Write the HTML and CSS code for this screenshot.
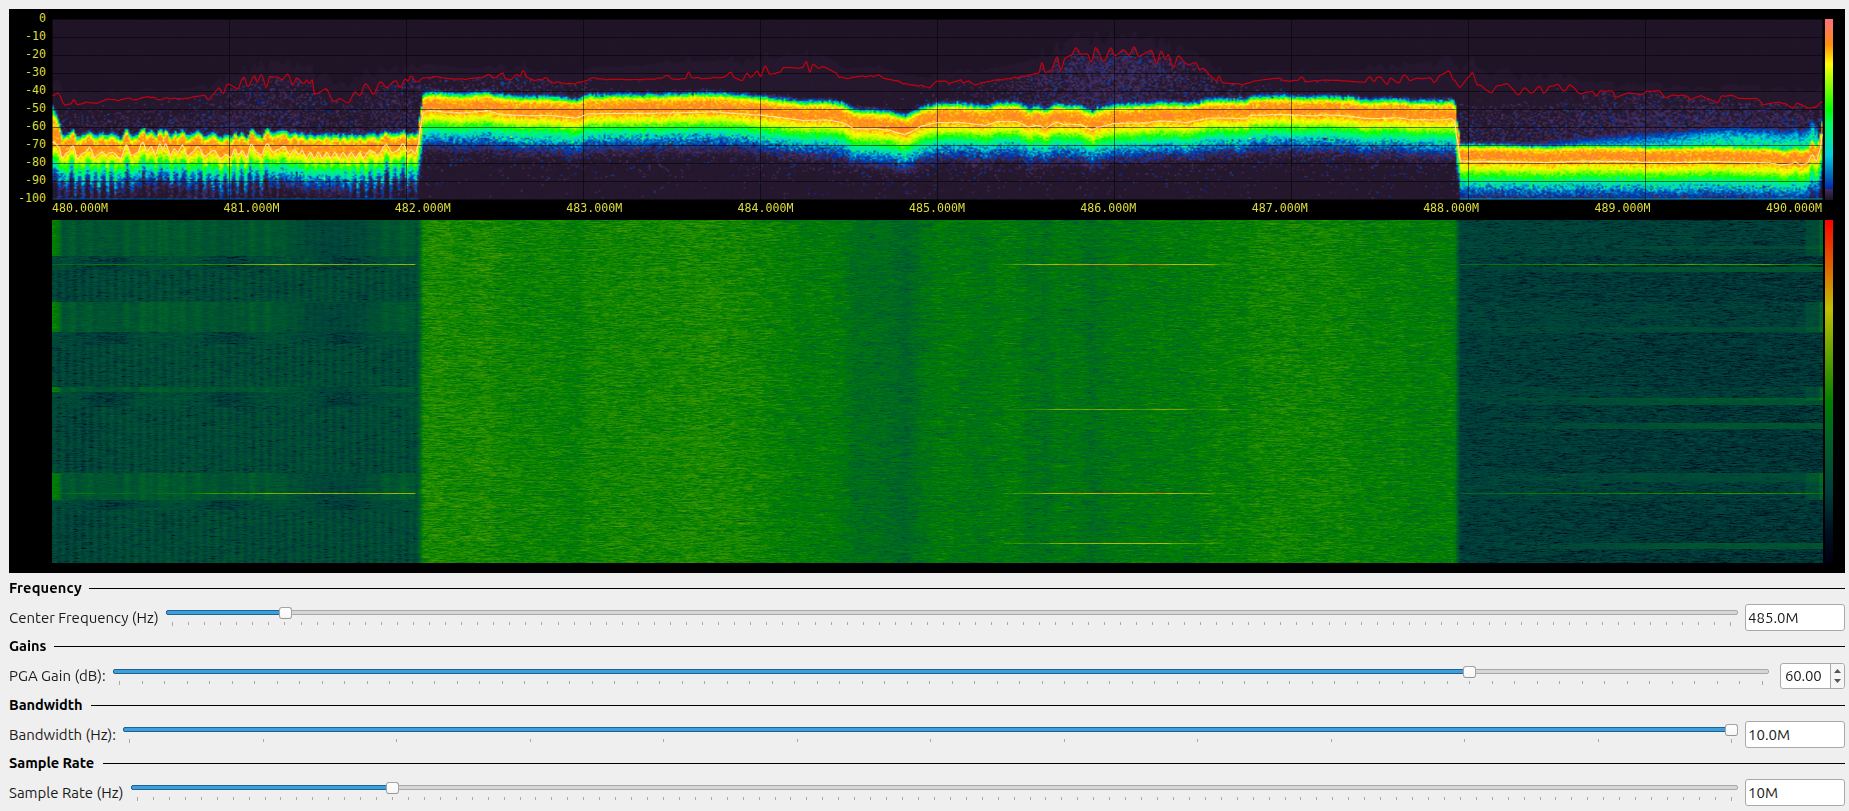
FILE: index.html
```html
<!DOCTYPE html>
<html lang="en">
<head>
<meta charset="utf-8">
<title>Spectrum</title>
<link rel="stylesheet" href="styles.css">
</head>
<body>
<main class="window">
  <section class="scope">
    <div class="y-axis"><span>0</span><span>-10</span><span>-20</span><span>-30</span><span>-40</span><span>-50</span><span>-60</span><span>-70</span><span>-80</span><span>-90</span><span>-100</span></div>
    <canvas class="spectrum" id="spectrum" width="1771" height="181"></canvas>
    <div class="scale scale-power"></div>
    <div class="x-axis"><span>480.000M</span><span>481.000M</span><span>482.000M</span><span>483.000M</span><span>484.000M</span><span>485.000M</span><span>486.000M</span><span>487.000M</span><span>488.000M</span><span>489.000M</span><span>490.000M</span></div>
    <canvas class="waterfall" id="waterfall" width="1771" height="343"></canvas>
    <div class="scale scale-fall"></div>
  </section>

  <section class="group">
    <h2><span class="t-frequency">Frequency</span></h2>
    <div class="row">
      <label class="l-frequency"><span>Center Frequency (Hz)</span></label>
      <div class="slider" data-steps="97" data-value="0.0728"></div>
      <div class="field">485.0M</div>
    </div>
  </section>
  <section class="group tall">
    <h2><span class="t-gains">Gains</span></h2>
    <div class="row">
      <label class="l-gain"><span>PGA Gain (dB):</span></label>
      <div class="slider" data-steps="73" data-value="0.8216"></div>
      <div class="spin"><span class="spin-value">60.00</span>
        <span class="spin-buttons">
          <svg width="7" height="4" viewBox="0 0 7 4"><path d="M0 4 3.5 0 7 4z"/></svg>
          <svg width="7" height="4" viewBox="0 0 7 4"><path d="M0 0 3.5 4 7 0z"/></svg>
        </span>
      </div>
    </div>
  </section>
  <section class="group">
    <h2><span class="t-bandwidth">Bandwidth</span></h2>
    <div class="row">
      <label class="l-bandwidth"><span>Bandwidth (Hz):</span></label>
      <div class="slider" data-steps="12" data-value="1"></div>
      <div class="field">10.0M</div>
    </div>
  </section>
  <section class="group">
    <h2><span class="t-rate">Sample Rate</span></h2>
    <div class="row">
      <label class="l-rate"><span>Sample Rate (Hz)</span></label>
      <div class="slider" data-steps="100" data-value="0.16"></div>
      <div class="field">10M</div>
    </div>
  </section>
</main>
<script src="scope.js"></script>
</body>
</html>
```
FILE: styles.css
```css
* { box-sizing: border-box; }
body { margin: 0; background: #efefef; color: #1a1a1a; font: 15px "Ubuntu", "Noto Sans", sans-serif; overflow: hidden; }
.window { width: 1849px; height: 811px; padding: 9px 4px 0 9px; }
.scope {
  height: 564px; margin-bottom: 5px; background: #000;
  display: grid; grid-template-columns: 43px 1771px 2px 8px 12px; grid-template-rows: 10px 181px 20px 343px 10px;
  font: 11.63px "DejaVu Sans Mono", monospace; color: #dcdc3c;
}
.y-axis { grid-area: 2 / 1; display: flex; flex-direction: column; margin-top: -10px; padding-right: 6px; text-align: right; height: 198px; }
.y-axis span { height: 18px; line-height: 18px; }
.spectrum { grid-area: 2 / 2; display: block; }
.x-axis { grid-area: 3 / 2; display: flex; justify-content: space-between; line-height: 17px; padding-right: 1px; }
.waterfall { grid-area: 4 / 2; display: block; }
.scale-power { grid-area: 2 / 4; background: linear-gradient(to top, #1e1426 0%, #432c5e 6%, #0028a8 6.1%, #00d0e0 25%, #00ff60 42%, #00ff00 50%, #ffff00 75%, #ff8c10 86%, #ff7080 100%); }
.scale-fall { grid-area: 4 / 4; background: linear-gradient(to top, #000010 0%, #001020 9%, #00403c 21%, #006428 37%, #008000 47%, #c0c000 74%, #ff0000 100%); }

.group { height: 58px; }
.group.tall { height: 59px; }
h2 { margin: 0; height: 20px; font-size: 14.6px; font-weight: 700; color: #000; display: flex; align-items: center; gap: 6px; letter-spacing: -.05px; }
.t-frequency { letter-spacing: .15px; }
h2 span { line-height: 20px; white-space: nowrap; }
h2::after { content: ""; flex: 1; height: 1px; background: #000; }
.t-frequency { width: 74px; }
.t-gains { width: 39px; }
.t-bandwidth { width: 76px; }
.t-rate { width: 88px; }
.row { height: 39px; display: flex; align-items: center; }
.tall .row { height: 40px; }
label { white-space: nowrap; flex: none; line-height: 20px; }
.l-frequency { width: 157px; }
.l-gain { width: 104px; }
.l-bandwidth { width: 114px; }
.l-rate { width: 122px; }

.slider { flex: 1; height: 38px; padding-top: 11px; margin-right: 7px; position: relative; }
.tall .slider { margin-right: 11px; height: 39px; padding-top: 12px; }
.groove { height: 5px; border: 1px solid #a8a8a8; border-radius: 2px; background: #d6d6d6; }
.fill { height: 5px; margin: -1px; border: 1px solid #1f6391; border-radius: 2px; background: #3f9fdc; }
.knob { position: absolute; top: 8px; width: 13px; height: 12px; border: 1px solid #a4a4a4; border-bottom-color: #969696; border-radius: 3px; background: linear-gradient(#fff, #f6f6f6); }
.tall .knob { top: 9px; }
.ticks { display: flex; justify-content: space-between; padding: 0 6px; margin-top: 7px; }
.ticks i { width: 1px; height: 3px; background: #a9a9a9; flex: none; }
.ticks i:first-child, .ticks i:last-child { height: 4px; }

.field { width: 100px; height: 27px; border: 1px solid #a9a9a9; border-radius: 3px; background: #fff; padding-left: 2px; line-height: 25px; margin-top: -1px; }
.spin { width: 65px; height: 26px; border: 1px solid #a9a9a9; border-radius: 3px; background: #fff; display: flex; line-height: 24px; overflow: hidden; margin-top: -1px; }
.spin-value { flex: 1; padding-left: 4px; letter-spacing: -.2px; }
.spin-buttons { width: 14px; border-left: 1px solid #a9a9a9; background: #f5f5f5; display: flex; flex-direction: column; align-items: center; justify-content: space-between; padding: 5px 0; }
.spin-buttons svg { fill: #555; display: block; }
```
FILE: scope.js
```js
// Deterministic random source so every paint is identical.
let seed = 48500;
function rnd() {
  seed = (seed + 0x6D2B79F5) | 0;
  let t = Math.imul(seed ^ (seed >>> 15), 1 | seed);
  t = (t + Math.imul(t ^ (t >>> 7), 61 | t)) ^ t;
  return ((t ^ (t >>> 14)) >>> 0) / 4294967296;
}
const gauss = () => rnd() + rnd() + rnd() + rnd() - 2;
const clamp = (v, a, b) => Math.max(a, Math.min(b, v));
const hump = (x, c, w) => Math.exp(-((x - c) ** 2) / (2 * w * w));

// Traces are listed per quarter of the band, in thirds of a pixel.
function trace(parts) {
  const pts = [];
  for (const [off, list] of parts)
    for (let i = 0; i < list.length; i += 2) pts.push([off - 52 + list[i] / 3, list[i + 1] / 3 - 19]);
  pts.sort((a, b) => a[0] - b[0]);
  return pts;
}
function sampler(pts) {
  return x => {
    if (x <= pts[0][0]) return pts[0][1];
    for (let i = 1; i < pts.length; i++) if (x <= pts[i][0]) {
      const a = pts[i - 1], b = pts[i];
      const t = (x - a[0]) / (b[0] - a[0] || 1), s = b[0] - a[0] < 10 ? t * t * (3 - 2 * t) : t;
      return a[1] + (b[1] - a[1]) * s;
    }
    return pts[pts.length - 1][1];
  };
}
const left = [160,425,175,440,185,472,200,456,218,436,230,474,250,457,268,442,282,470,305,455,315,462,335,455,360,474,378,433,392,464,408,460,427,426,440,454,452,440,465,462,478,430,488,447,495,430,510,464,522,445,532,456,545,434,562,467,577,455,592,438,612,467,640,450,660,474,678,462,690,472,703,445,713,464,725,450,738,472,752,430,768,456,782,464,800,430,817,455,832,448,850,438,868,462,882,448,895,462,905,450];
for (let x = 917, k = 0; x < 1105; x += 12.3, k++) left.push(x, k % 2 ? 456 : 473);
left.push(1110,450,1132,464,1157,432,1175,456,1192,450,1207,430,1222,456,1232,448,1245,460,1252,438,1260,380,1268,335,1290,331,1379,338);
const avgPts = trace([
  [0, left],
  [460, [0,338,80,331,120,341,200,346,270,345,345,353,385,340,600,338,760,334,900,344,1030,360,1100,358,1150,367,1180,385,1250,385,1290,390,1333,403,1379,380]],
  [920, [0,377,50,366,120,366,195,375,230,363,290,364,325,380,350,374,375,383,405,366,430,371,480,372,512,388,535,380,580,369,680,367,720,361,800,366,870,352,930,353,975,355,990,345,1080,342,1180,346,1215,343,1290,347,1330,354,1379,354]],
  [1380, [0,353,60,352,90,358,195,358,212,354,222,362,230,420,240,482,370,483,500,486,600,482,740,483,820,486,900,485,1000,483,1100,486,1170,488,1200,493,1230,491,1245,485,1260,493,1280,488,1295,463,1308,482,1318,450,1326,400]]
]);
const maxPts = trace([
  [0, [158,285,172,277,192,312,210,312,220,297,230,312,260,305,290,308,320,296,350,299,385,293,400,299,440,288,475,297,500,293,560,294,610,283,625,297,655,263,668,280,680,250,710,265,730,232,742,260,762,227,770,243,782,223,798,258,808,228,830,230,845,238,862,222,878,255,888,233,912,250,918,240,925,247,935,238,942,283,975,264,1000,303,1020,294,1042,308,1065,275,1078,285,1095,250,1118,280,1140,245,1158,260,1185,240,1198,262,1215,235,1222,243,1232,227,1248,245,1270,232,1300,229,1379,236]],
  [460, [0,237,60,232,85,223,100,232,128,217,134,235,150,237,170,222,178,228,188,210,200,230,225,241,255,234,275,245,345,250,375,240,395,232,440,237,550,237,600,233,622,224,635,235,675,235,684,215,695,233,730,234,790,229,812,215,822,232,845,239,860,219,870,231,890,214,900,229,914,197,928,221,958,215,970,200,1025,203,1038,184,1048,217,1058,191,1075,205,1085,198,1125,215,1138,230,1165,236,1180,228,1220,229,1255,224,1275,234,1310,242,1335,250,1379,257]],
  [920, [0,256,25,262,50,244,70,241,90,249,120,237,127,247,140,240,165,252,200,243,290,231,355,217,364,188,375,217,390,212,410,170,420,208,435,172,452,165,467,142,480,160,500,160,512,187,525,142,550,182,571,141,583,165,610,150,625,163,641,139,655,167,692,149,708,188,722,152,735,175,743,162,758,200,774,167,800,192,827,187,838,207,850,204,887,242,896,226,904,247,970,252,1000,242,1075,233,1090,241,1130,240,1143,229,1158,243,1220,238,1310,243,1330,246,1347,230,1362,243,1370,230]],
  [1380, [0,230,20,253,30,233,55,246,70,225,90,238,115,233,150,232,160,247,180,224,205,211,220,238,240,260,275,216,292,256,302,254,318,268,332,276,352,257,380,249,412,284,432,263,452,277,478,258,490,277,510,257,530,252,552,271,568,253,600,280,635,272,647,285,660,271,695,272,706,291,745,276,785,282,800,272,835,271,855,292,882,283,920,286,930,297,960,286,1010,305,1025,288,1055,284,1080,294,1130,294,1150,313,1195,303,1238,322,1250,306,1285,323,1305,319,1323,304]]
]);
const avg = sampler(avgPts), peak = sampler(maxPts);

function ramp(stops) {
  return v => {
    v = clamp(v, 0, 1);
    let i = 1;
    while (i < stops.length - 1 && v > stops[i][0]) i++;
    const a = stops[i - 1], b = stops[i], t = clamp((v - a[0]) / (b[0] - a[0]), 0, 1);
    return [1, 2, 3].map(k => a[k] + (b[k] - a[k]) * t);
  };
}
const heat = ramp([[0,30,20,38],[.02,38,24,46],[.06,75,50,104],[.061,0,40,168],[.25,0,208,224],[.42,0,255,96],[.5,0,255,0],[.75,255,255,0],[.86,255,140,16],[1,255,112,128]]);
const fall = ramp([[0,0,0,16],[.09,0,16,32],[.21,0,64,60],[.37,0,100,40],[.47,0,128,0],[.74,192,192,0],[1,255,0,0]]);
const nodes = [[-60,.0],[-46,.01],[-40,.025],[-34,.055],[-28,.13],[-22,.27],[-14,.5],[-8,.7],[-1,.82],[6,.88],[12,.82],[15,.73],[17,.5],[18.5,.25],[20,.1],[21.5,.04],[24,.01]];
function profile(d) {
  if (d <= nodes[0][0]) return 0;
  for (let i = 1; i < nodes.length; i++) if (d <= nodes[i][0]) {
    const a = nodes[i - 1], b = nodes[i];
    return a[1] + (b[1] - a[1]) * (d - a[0]) / (b[0] - a[0]);
  }
  return 0;
}

function paint(id, w, h, value, map) {
  const cell = document.createElement('canvas');
  cell.width = w; cell.height = h;
  const c = cell.getContext('2d'), img = c.createImageData(w, h);
  for (let y = 0; y < h; y++) for (let x = 0; x < w; x++) {
    const rgb = map(value(x, y)), o = (y * w + x) * 4;
    img.data[o] = rgb[0]; img.data[o + 1] = rgb[1]; img.data[o + 2] = rgb[2]; img.data[o + 3] = 255;
  }
  c.putImageData(img, 0, 0);
  const out = document.getElementById(id), g = out.getContext('2d');
  g.imageSmoothingEnabled = true;
  g.drawImage(cell, 0, 0, out.width, out.height);
  return g;
}

const W = 1024, px = 1771 / W;
const colAvg = [], colMax = [], jitter = [], streak = [];
for (let i = 0; i < W; i++) {
  const x = i * px;
  colAvg.push(avg(x)); colMax.push(peak(x)); jitter.push(gauss() * 1.1);
  streak.push(1 + .2 * Math.sin(x * 2 * Math.PI / 8.1) * (.8 + .5 * Math.sin(x / 23)) + gauss() * .06);
}

// Power histogram
const g = paint('spectrum', W, 128, (i, j) => {
  const x = i * px, y = j * 181 / 128, m = colAvg[i];
  const inLeft = x < 365, inRight = x > 1407;
  const d = m - y;
  let n = d;
  if (inLeft && m > 118) {
    // The noise floor has a flatter upper edge than its average.
    const k = x > 250 ? .35 : .6;
    let top = (x > 250 ? 111 : 108.5) + (m - 124) * k;
    if (x < 11) top -= (11 - x) * 1.9;
    n = d > 0 ? d * 19.5 / (m - top) : (118 + (m - 118) * .7 + 3 - y) < 0 ? (118 + (m - 118) * .7 + 3 - y) * streak[i] : 0;
  }
  if (inRight) n = n > 0 ? n * 1.12 : n * .96;
  let v = profile(n + jitter[i] * .7 + gauss() * .8);
  v *= 1 + gauss() * (v < .3 ? .55 : v < .65 ? (n > 14 ? .05 : .16) : .07);
  if (n < -22) v *= .6 + rnd() * .9;
  if (n < -30 && rnd() < .42 * Math.exp((n + 30) / 13)) v = Math.max(v, .03 + rnd() * .034 + (rnd() < .12 ? .04 : 0));
  if (inRight && n > 12 && x < 1765) {
    const reach = 19 + 19 * clamp((x - 1415) / 260, 0, 1);
    const k = clamp((reach - d) / 17, 0, 1);
    v = Math.max(v, k * (.1 + .24 * clamp((x - 1400) / 250, 0, 1)) * (.5 + rnd() * .9));
  }
  const bg = y > colMax[i] - 13 + 4 * Math.sin(x / 60) ? .018 : .002;
  let back = bg + gauss() * .003;
  if (d > 16 && y > colMax[i]) {
    const dens = .34 * hump(x, 225, 60) + .75 * hump(x, 1055, 72) + .35 * hump(x, 345, 25) + .3 * hump(x, 460, 50)
      + (inRight ? .4 * clamp((y - 80) / 20, 0, 1) + .3 * hump(x, 1590, 50) + .22 * hump(x, 1710, 50) : 0)
      + (inLeft ? .3 * clamp((y - 85) / 16, 0, 1) * (x < 200 ? 1 : .3) : 0);
    if (rnd() < dens) back = .028 + rnd() * .034 + (rnd() < .07 ? .05 : 0);
  }
  v = Math.max(v, back);
  if (j === 127 && (inLeft || inRight)) v = Math.max(v, inRight ? .2 : .09 + rnd() * .05);
  return v;
}, heat);

g.fillStyle = 'rgba(0,0,0,.52)';
for (let k = 0; k <= 10; k++) {
  g.fillRect(0, k * 18, 1771, 1);
  g.fillRect(k * 177, 0, 1, 181);
}
function stroke(fn, style, width) {
  g.beginPath();
  for (let x = 0; x <= 1770; x += 1) g.lineTo(x + .5, fn(x) + .5);
  g.strokeStyle = style; g.lineWidth = width; g.stroke();
}
const wob = [];
for (let i = 0; i < 1800; i++) wob.push(gauss() * .5);
stroke(x => peak(x) + wob[x >> 2], 'rgba(205,0,12,.95)', 1.2);
stroke(x => avg(x) + wob[x >> 1] * .5, 'rgba(255,238,200,.8)', 1.1);

// Waterfall
const span = (y, list) => list.some(([a, b]) => y >= a && y < b);
const bursts = { 44: [.66, .83, .5], 126: [0, .62, 0], 189: [0, .62, 0], 273: [.66, .78, .47], 323: [0, .68, 0] };
delete bursts[126];
let prev = 0, wander = 0;
paint('waterfall', W, 343, (i, y) => {
  const x = i * px, m = colAvg[i];
  const e = Math.log(-Math.log(rnd() * .998 + .001) * .5 - Math.log(rnd() * .998 + .001) * .5) * .042;
  prev = prev * .55 + e * .8;
  let v;
  if (x < 363) {
    const bright = span(y, [[0, 36], [82, 112], [167, 172], [253, 280]]);
    const mid = span(y, [[36, 50], [112, 124], [172, 187], [280, 290]]);
    const base = .275 - (m - 132) * .0055;
    if (bright) v = base + .04 + .1 * clamp((11 - x) / 6, 0, 1) - .06 * hump(x, 280, 35);
    else v = .262 + (mid ? .012 : -.004) + (mid ? .012 : .034) * Math.sin(x * 2 * Math.PI / 8.1)
      - (mid ? .07 * (hump(x, 58, 16) + hump(x, 175, 18) + hump(x, 290, 20)) : 0) - .025 * hump(x, 20, 25);
    v += prev * (bright ? .7 : 1);
  } else if (x < 1407) {
    v = .5 - (m - 94) * .0060 + prev * 1.1;
  } else {
    const k = clamp((x - 1407) / 250, 0, 1);
    v = .21 - .02 * k;
    if (span(y, [[0, 36], [82, 112], [167, 180], [253, 280]])) v += .02 + (x > 1752 ? .05 : 0) + (x > 1766 ? .1 : 0);
    if (span(y, [[47, 52], [178, 185], [203, 209], [323, 329]])) v += .11 * k;
    if (span(y, [[26, 29], [107, 113], [253, 262]])) v += .05 * k;
    v += prev * (v > .25 ? .65 : 1.05);
  }
  v += .012;
  const b = bursts[y];
  wander = wander * .9 + gauss() * .03;
  if (b) {
    if (x < 363 && b[0]) v = Math.max(v, .4 + (b[0] - .4) * Math.min(1, hump(x, 235, 60) + hump(x, 345, 40)) + wander);
    else if (x > 1407 && b[2]) v = Math.max(v, b[2] - .06 + .1 * hump(x, 1610, 70) + .08 * hump(x, 1720, 50) + wander);
    else if (x > 950 && x < 1200) v = Math.max(v, .45 + (b[1] - .45) * Math.min(1, 1.25 * hump(x, 1065, 66)) + wander);
  }
  return v;
}, fall);

// Sliders
for (const s of document.querySelectorAll('.slider')) {
  const v = +s.dataset.value, w = s.clientWidth, at = 6 + (w - 13) * v;
  s.innerHTML = '<div class="groove"><div class="fill"></div></div><div class="knob"></div><div class="ticks"></div>';
  s.querySelector('.fill').style.width = at + 'px';
  s.querySelector('.knob').style.left = Math.round(at - 6) + 'px';
  s.querySelector('.ticks').innerHTML = '<i></i>'.repeat(+s.dataset.steps + 1);
}
```
